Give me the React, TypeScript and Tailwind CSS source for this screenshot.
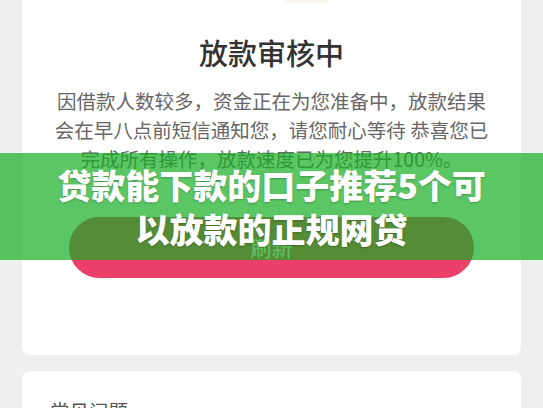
import React from "react";

export default function App() {
  const font = { fontFamily: '"Noto Sans CJK SC", "Noto Sans", sans-serif' };
  return (
    <div
      className="relative w-[543px] h-[408px] overflow-hidden bg-[#efefef] px-[22px]"
      style={font}
    >
      <div className="bg-white rounded-b-[8px] mt-[-20px] pt-[20px] flex flex-col items-center pb-[77px]">
        <div className="h-[3px] w-[45px] ml-[70px] bg-[#faf6e8] rounded-b-full" />
        <div className="mt-[31px] text-[29px] leading-[36px] font-medium text-[#333333]">
          放款审核中
        </div>
        <p className="mt-[16px] w-[446px] text-center text-[19.5px] leading-[29px] text-[#666666]">
          因借款人数较多，资金正在为您准备中，放款结果会在早八点前短信通知您，请您耐心等待 恭喜您已完成所有操作，放款速度已为您提升100%。
        </p>
        <button className="mt-[44px] w-[405px] h-[61px] rounded-full bg-[#ea4069] text-white text-[21px] flex items-center justify-center">
          刷新
        </button>
      </div>
      <div className="mt-[16px] bg-white rounded-t-[8px] h-[80px] flex items-start justify-between pl-[28px] pr-[22px] pt-[26px]">
        <span className="text-[19.5px] leading-[28px] text-[#555555]">常见问题</span>
        <svg
          width="22"
          height="22"
          viewBox="0 0 24 24"
          fill="none"
          stroke="#c8c8c8"
          strokeWidth="2"
          strokeLinecap="round"
          strokeLinejoin="round"
          className="mt-[6px]"
        >
          <path d="m9 18 6-6-6-6" />
        </svg>
      </div>
      <div className="absolute left-0 right-0 top-[153px] h-[107px] bg-[rgba(22,174,34,0.7)] flex items-center justify-center">
        <div
          className="w-[446px] text-center text-white font-black text-[34px] leading-[44px]"
          style={{ textShadow: "0 1px 2px rgba(0,0,0,0.25)" }}
        >
          贷款能下款的口子推荐5个可以放款的正规网贷
        </div>
      </div>
    </div>
  );
}
